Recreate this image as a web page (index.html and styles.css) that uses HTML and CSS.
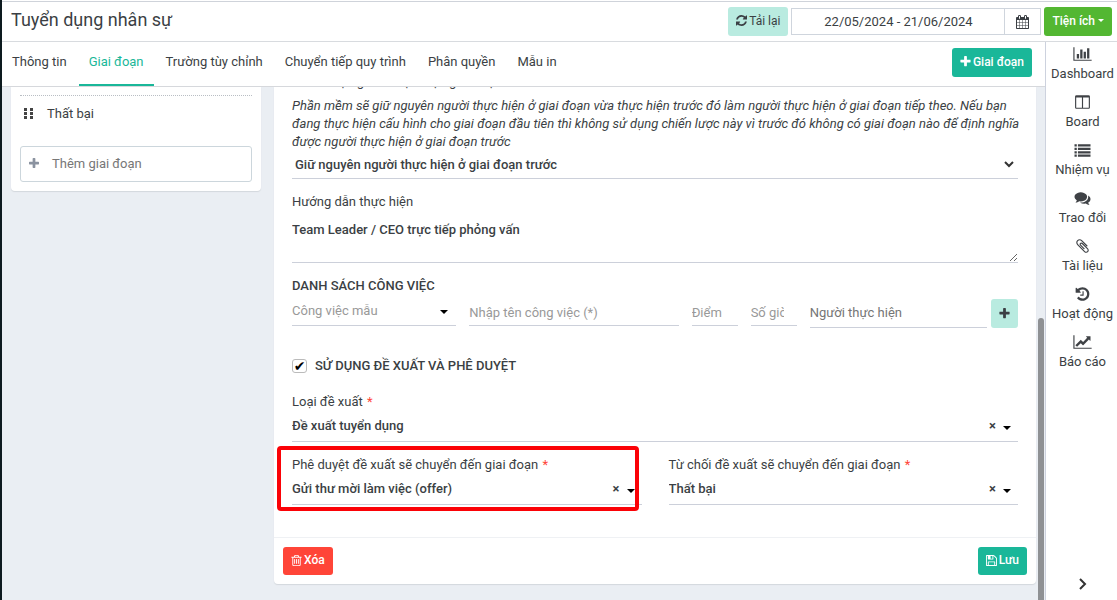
FILE: index.html
```html
<!DOCTYPE html>
<html lang="vi">
<head>
<meta charset="utf-8">
<meta name="viewport" content="width=device-width, initial-scale=1">
<title>Tuyển dụng nhân sự</title>
<link rel="stylesheet" href="styles.css">
</head>
<body>
<svg class="sprite" aria-hidden="true">
  <symbol id="i-refresh" viewBox="128 0 1536 1792"><path d="M1639 1056q0 5-1 7-64 268-268 434.500t-478 166.500q-146 0-282.500-55t-243.500-157l-129 129q-19 19-45 19t-45-19-19-45v-448q0-26 19-45t45-19h448q26 0 45 19t19 45-19 45l-137 137q71 66 161 102t187 36q134 0 250-65t186-179q11-17 53-117 8-23 30-23h192q13 0 22.500 9.500t9.500 22.500zm25-800v448q0 26-19 45t-45 19h-448q-26 0-45-19t-19-45 19-45l138-138q-148-137-349-137-134 0-250 65t-186 179q-11 17-53 117-8 23-30 23h-199q-13 0-22.500-9.500t-9.500-22.500v-7q65-268 270-434.500t480-166.500q146 0 284 55.500t245 156.500l130-129q19-19 45-19t45 19 19 45z"/></symbol>
  <symbol id="i-plus" viewBox="192 0 1408 1792"><path d="M1600 736v192q0 40-28 68t-68 28h-416v416q0 40-28 68t-68 28h-192q-40 0-68-28t-28-68v-416h-416q-40 0-68-28t-28-68v-192q0-40 28-68t68-28h416v-416q0-40 28-68t68-28h192q40 0 68 28t28 68v416h416q40 0 68 28t28 68z"/></symbol>
  <symbol id="i-calendar" viewBox="64 0 1664 1792"><path d="M192 1664h288v-288h-288v288zm352 0h320v-288h-320v288zm-352-352h288v-320h-288v320zm352 0h320v-320h-320v320zm-352-384h288v-288h-288v288zm736 736h320v-288h-320v288zm-384-736h320v-288h-320v288zm768 736h288v-288h-288v288zm-384-352h320v-320h-320v320zm-352-864v-288q0-13-9.500-22.500t-22.500-9.500h-64q-13 0-22.500 9.500t-9.500 22.500v288q0 13 9.500 22.500t22.500 9.500h64q13 0 22.500-9.500t9.500-22.500zm736 864h288v-320h-288v320zm-384-384h320v-288h-320v288zm384 0h288v-288h-288v288zm32-480v-288q0-13-9.500-22.500t-22.500-9.500h-64q-13 0-22.500 9.500t-9.500 22.500v288q0 13 9.500 22.500t22.500 9.500h64q13 0 22.500-9.500t9.500-22.500zm384-64v1280q0 52-38 90t-90 38h-1408q-52 0-90-38t-38-90v-1280q0-52 38-90t90-38h128v-96q0-66 47-113t113-47h64q66 0 113 47t47 113v96h384v-96q0-66 47-113t113-47h64q66 0 113 47t47 113v96h128q52 0 90 38t38 90z"/></symbol>
  <symbol id="i-bars" viewBox="0 0 2048 1792"><path d="M640 896v512h-256v-512h256zm384-512v1024h-256v-1024h256zm1024 1152v128h-2048v-1536h128v1408h1920zm-640-896v768h-256v-768h256zm384-384v1152h-256v-1152h256z"/></symbol>
  <symbol id="i-columns" viewBox="0 0 1792 1792"><path d="M224 1536h608v-1152h-640v1120q0 13 9.500 22.500t22.500 9.500zm1376-32v-1120h-640v1152h608q13 0 22.500-9.500t9.500-22.500zm128-1216v1216q0 66-47 113t-113 47h-1344q-66 0-113-47t-47-113v-1216q0-66 47-113t113-47h1344q66 0 113 47t47 113z"/></symbol>
  <symbol id="i-list" viewBox="0 0 1792 1792"><path d="M0 256h256v256H0zM384 256h1408v256H384zM0 640h256v256H0zM384 640h1408v256H384zM0 1024h256v256H0zM384 1024h1408v256H384zM0 1408h256v256H0zM384 1408h1408v256H384z"/></symbol>
  <symbol id="i-comments" viewBox="0 0 1792 1792"><path d="M1408 768q0 139-94 257t-256.500 186.500-353.500 68.500q-86 0-176-16-124 88-278 128-36 9-86 16h-3q-11 0-20.500-8t-11.500-21q-1-3-1-6.500t.5-6.500 2-6l2.500-5 3.500-5.500 4-5 4.500-5 4-4.500q5-6 23-25t26-29.500 22.500-29 25-38.500 20.500-44q-124-72-195-177t-71-224q0-139 94-257t256.500-186.500 353.500-68.500 353.500 68.500 256.500 186.500 94 257zm384 256q0 120-71 224.500t-195 176.500q10 24 20.500 44t25 38.500 22.500 29 26 29.500 23 25q1 1 4 4.500t4.500 5 4 5 3.500 5.500l2.500 5 2 6 .5 6.500-1 6.500q-3 14-13 22t-22 7q-50-7-86-16-154-40-278-128-90 16-176 16-271 0-472-132 58 4 88 4 161 0 309-45t264-129q125-92 192-212t67-254q0-77-23-152 129 71 204 178t75 230z"/></symbol>
  <symbol id="i-clip" viewBox="0 0 1792 1792"><path d="M1596 1385q0 117-79 196t-196 79q-135 0-235-100l-777-776q-113-115-113-271 0-159 110-270t269-111q158 0 273 113l605 606q10 10 10 22 0 16-30.500 46.500t-46.500 30.500q-13 0-23-10l-606-607q-79-77-181-77-106 0-179 75t-73 181q0 105 76 181l776 777q63 63 145 63 64 0 106-42t42-106q0-82-63-145l-581-581q-26-24-60-24-29 0-48 19t-19 48q0 32 25 59l410 410q10 10 10 22 0 16-31 47t-47 31q-12 0-22-10l-410-410q-63-61-63-149 0-82 57-139t139-57q88 0 149 63l581 581q100 98 100 235z"/></symbol>
  <symbol id="i-history" viewBox="0 0 1792 1792"><path d="M1664 896q0 156-61 298t-164 245-245 164-298 61q-172 0-327-72.500t-264-204.500q-7-10-6.500-22.500t8.500-20.500l137-138q10-9 25-9 16 2 23 12 73 95 179 147t225 52q104 0 198.500-40.500t163.500-109.500 109.500-163.500 40.500-198.500-40.500-198.500-109.500-163.500-163.500-109.500-198.500-40.500q-98 0-188 35.500t-160 101.500l137 138q31 30 14 69-17 40-59 40h-448q-26 0-45-19t-19-45v-448q0-42 40-59 39-17 69 14l130 129q107-101 244.500-156.500t284.500-55.500q156 0 298 61t245 164 164 245 61 298zm-640-288v448q0 14-9 23t-23 9h-320q-14 0-23-9t-9-23v-64q0-14 9-23t23-9h224v-352q0-14 9-23t23-9h64q14 0 23 9t9 23z"/></symbol>
  <symbol id="i-line" viewBox="0 0 2048 1792"><path d="M2048 1536v128h-2048v-1536h128v1408h1920zm-128-1248v435q0 21-19.500 29.500t-35.500-7.500l-121-121-633 633q-10 10-23 10t-23-10l-233-233-416 416-192-192 585-585q10-10 23-10t23 10l233 233 464-464-121-121q-16-16-7.500-35.500t29.500-19.500h435q14 0 23 9t9 23z"/></symbol>
  <symbol id="i-trash" viewBox="192 0 1408 1792"><path d="M704 736v576q0 14-9 23t-23 9h-64q-14 0-23-9t-9-23v-576q0-14 9-23t23-9h64q14 0 23 9t9 23zm256 0v576q0 14-9 23t-23 9h-64q-14 0-23-9t-9-23v-576q0-14 9-23t23-9h64q14 0 23 9t9 23zm256 0v576q0 14-9 23t-23 9h-64q-14 0-23-9t-9-23v-576q0-14 9-23t23-9h64q14 0 23 9t9 23zm128 724v-948h-896v948q0 22 7 40.500t14.500 27 10.500 8.500h832q3 0 10.500-8.500t14.500-27 7-40.500zm-672-1076h448l-48-117q-7-9-17-11h-317q-10 2-17 11zm928 32v64q0 14-9 23t-23 9h-96v948q0 83-47 143.500t-113 60.500h-832q-66 0-113-58.500t-47-141.500v-952h-96q-14 0-23-9t-9-23v-64q0-14 9-23t23-9h309l70-167q15-37 54-63t79-26h320q40 0 79 26t54 63l70 167h309q14 0 23 9t9 23z"/></symbol>
  <symbol id="i-save" viewBox="128 0 1536 1792"><path d="M512 1536h768v-384h-768v384zm896 0h128v-896q0-14-10-38.500t-20-34.500l-281-281q-10-10-34-20t-39-10v416q0 40-28 68t-68 28h-576q-40 0-68-28t-28-68v-416h-128v1280h128v-416q0-40 28-68t68-28h832q40 0 68 28t28 68v416zm-384-928v-320q0-13-9.500-22.500t-22.500-9.500h-192q-13 0-22.500 9.500t-9.500 22.500v320q0 13 9.500 22.500t22.500 9.500h192q13 0 22.500-9.500t9.500-22.500zm640 32v928q0 40-28 68t-68 28h-1344q-40 0-68-28t-28-68v-1344q0-40 28-68t68-28h928q40 0 88 20t76 48l280 280q28 28 48 76t20 88z"/></symbol>
</svg>

<div class="app">
  <header class="topbar">
    <h1 class="title">Tuyển dụng nhân sự</h1>
    <button class="btn btn-soft" type="button"><svg class="icon"><use href="#i-refresh"/></svg>Tải lại</button>
    <div class="range">
      <input class="range-input" type="text" aria-label="Khoảng thời gian" value="22/05/2024 - 21/06/2024">
      <button class="range-btn" type="button" aria-label="Chọn ngày"><svg class="icon"><use href="#i-calendar"/></svg></button>
    </div>
    <button class="btn btn-green" type="button">Tiện ích<span class="caret-sm"></span></button>
  </header>

  <div class="body">
    <div class="main">
      <nav class="tabs">
        <a class="tab" href="#">Thông tin</a>
        <a class="tab tab-active" href="#">Giai đoạn</a>
        <a class="tab" href="#">Trường tùy chỉnh</a>
        <a class="tab" href="#">Chuyển tiếp quy trình</a>
        <a class="tab" href="#">Phân quyền</a>
        <a class="tab" href="#">Mẫu in</a>
        <button class="btn btn-teal tabs-add" type="button"><svg class="icon"><use href="#i-plus"/></svg>Giai đoạn</button>
      </nav>

      <div class="workspace">
        <aside class="card stages">
          <div class="stage">
            <svg class="grip" viewBox="0 0 10 11"><path d="M0 0h3v3H0zM6 0h3v3H6zM0 4h3v3H0zM6 4h3v3H6zM0 8h3v3H0zM6 8h3v3H6z"/></svg>
            <span>Thất bại</span>
          </div>
          <button class="stage-add" type="button"><svg class="icon"><use href="#i-plus"/></svg>Thêm giai đoạn</button>
        </aside>

        <form class="card detail">
          <div class="fields">
            <label class="label strategy-label" for="strategy">Chiến lược giành thực hiện giai đoạn</label>
            <p class="hint">Phần mềm sẽ giữ nguyên người thực hiện ở giai đoạn vừa thực hiện trước đó làm người thực hiện ở giai đoạn tiếp theo. Nếu bạn đang thực hiện cấu hình cho giai đoạn đầu tiên thì không sử dụng chiến lược này vì trước đó không có giai đoạn nào để định nghĩa được người thực hiện ở giai đoạn trước</p>
            <div class="pick pick-strategy">
              <select class="control" id="strategy"><option>Giữ nguyên người thực hiện ở giai đoạn trước</option></select>
              <svg class="chevron" viewBox="0 0 10 7"><path d="M1 1l4 4 4-4"/></svg>
            </div>

            <label class="label guide-label" for="guide">Hướng dẫn thực hiện</label>
            <textarea class="guide" id="guide">Team Leader / CEO trực tiếp phỏng vấn</textarea>

            <h2 class="heading">DANH SÁCH CÔNG VIỆC</h2>
            <div class="jobs">
              <div class="pick pick-job">
                <select class="control control-muted" aria-label="Công việc mẫu"><option>Công việc mẫu</option></select>
                <span class="caret"></span>
              </div>
              <input class="job-input" type="text" aria-label="Tên công việc" placeholder="Nhập tên công việc (*)">
              <input class="job-input" type="text" aria-label="Điểm" placeholder="Điểm">
              <input class="job-input job-hours" type="text" aria-label="Số giờ" placeholder="Số giờ">
              <div class="assign">
                <input class="job-input job-person" type="text" aria-label="Người thực hiện" placeholder="Người thực hiện">
                <button class="btn btn-soft btn-plus" type="button" aria-label="Thêm công việc"><svg class="icon"><use href="#i-plus"/></svg></button>
              </div>
            </div>

            <label class="approval"><input class="check" type="checkbox" checked>SỬ DỤNG ĐỀ XUẤT VÀ PHÊ DUYỆT</label>

            <div class="field">
              <label class="label" for="kind">Loại đề xuất <span class="req">*</span></label>
              <div class="pick">
                <select class="control" id="kind"><option>Đề xuất tuyển dụng</option></select>
                <button class="clear" type="button" aria-label="Xóa lựa chọn">×</button><span class="caret"></span>
              </div>
            </div>
            <div class="pair">
              <div class="field field-marked">
                <label class="label" for="approve">Phê duyệt đề xuất sẽ chuyển đến giai đoạn <span class="req">*</span></label>
                <div class="pick">
                  <select class="control" id="approve"><option>Gửi thư mời làm việc (offer)</option></select>
                  <button class="clear" type="button" aria-label="Xóa lựa chọn">×</button><span class="caret"></span>
                </div>
              </div>
              <div class="field">
                <label class="label" for="reject">Từ chối đề xuất sẽ chuyển đến giai đoạn <span class="req">*</span></label>
                <div class="pick">
                  <select class="control" id="reject"><option>Thất bại</option></select>
                  <button class="clear" type="button" aria-label="Xóa lựa chọn">×</button><span class="caret"></span>
                </div>
              </div>
            </div>
          </div>
          <footer class="actions">
            <button class="btn btn-red" type="button"><svg class="icon"><use href="#i-trash"/></svg>Xóa</button>
            <button class="btn btn-teal" type="submit"><svg class="icon"><use href="#i-save"/></svg>Lưu</button>
          </footer>
        </form>
        <div class="scroll"><div class="thumb"></div></div>
      </div>
    </div>

    <nav class="rail">
      <a class="rail-item" href="#"><svg class="rail-icon"><use href="#i-bars"/></svg>Dashboard</a>
      <a class="rail-item" href="#"><svg class="rail-icon"><use href="#i-columns"/></svg>Board</a>
      <a class="rail-item" href="#"><svg class="rail-icon"><use href="#i-list"/></svg>Nhiệm vụ</a>
      <a class="rail-item" href="#"><svg class="rail-icon"><use href="#i-comments"/></svg>Trao đổi</a>
      <a class="rail-item" href="#"><svg class="rail-icon"><use href="#i-clip"/></svg>Tài liệu</a>
      <a class="rail-item" href="#"><svg class="rail-icon"><use href="#i-history"/></svg>Hoạt động</a>
      <a class="rail-item" href="#"><svg class="rail-icon"><use href="#i-line"/></svg>Báo cáo</a>
      <button class="rail-toggle" type="button" aria-label="Thu gọn"><svg viewBox="0 0 8 12"><path d="M1 1l5 5-5 5"/></svg></button>
    </nav>
  </div>
</div>
</body>
</html>
```
FILE: styles.css
```css
* { box-sizing: border-box; }

body {
  margin: 0;
  font: 13px/18px Roboto, "Noto Sans", sans-serif;
  color: #3b3f44;
  background: #fff;
}

button, input, select, textarea { font: inherit; color: inherit; }
button { cursor: pointer; }
a { color: inherit; text-decoration: none; }
.sprite { display: none; }

.app {
  display: flex;
  flex-direction: column;
  height: 100vh;
  overflow: hidden;
  border-left: 2px solid #0d1a1f;
}

/* Top bar */
.topbar {
  display: flex;
  flex: none;
  align-items: center;
  gap: 3px;
  height: 41px;
  margin-top: 1px;
  padding: 0 5px 0 9px;
  border-top: 1px solid #cfd3da;
  border-bottom: 1px solid #d8dbdf;
}
.title {
  flex: 1;
  margin: 0;
  font-size: 18px;
  line-height: 24px;
  font-weight: 400;
  padding-bottom: 3px;
}

.btn {
  display: inline-flex;
  flex: none;
  align-items: center;
  justify-content: center;
  gap: 2px;
  height: 29px;
  padding: 0 8px 2px;
  border: 0;
  border-radius: 3px;
  font-size: 12px;
}
.btn-soft { background: #b9ebe0; }
.btn-green { background: #53b732; color: #fff; font-weight: 500; }
.btn-teal { background: #1ab799; color: #fff; font-weight: 500; }
.btn-red { background: #ff4538; color: #fff; font-weight: 500; }
.icon { width: 11px; height: 13px; fill: currentColor; }

.range { display: flex; width: 250px; height: 27px; }
.range-input {
  flex: 1;
  min-width: 0;
  padding: 0;
  border: 1px solid #cfd5dd;
  text-align: center;
}
.range-btn {
  width: 36px;
  padding: 0;
  border: 1px solid #cfd5dd;
  border-left: 0;
  background: #fff;
}
.range-btn .icon { width: 13px; height: 14px; vertical-align: middle; }
.caret-sm {
  margin-left: 1px;
  border: 3px solid transparent;
  border-top-color: currentColor;
  border-bottom: 0;
}

.body { display: flex; flex: 1; min-height: 0; }
.main { display: flex; flex: 1; flex-direction: column; min-width: 0; }

/* Tabs */
.tabs {
  display: flex;
  flex: none;
  gap: 2px;
  height: 45px;
  padding-right: 13px;
  border-bottom: 1px solid #d6d8dc;
}
.tab {
  padding: 11px 10px 0;
  border-bottom: 2px solid transparent;
}
.tab-active { color: #1ab799; border-bottom-color: #1ab799; }
.tabs-add { margin: 6px 0 0 auto; }

/* Scrolled workspace */
.workspace {
  display: grid;
  grid-template-columns: 250px minmax(0, 1fr) 9px;
  flex: 1;
  align-items: start;
  min-height: 0;
  padding-left: 9px;
  overflow: hidden;
  background: #eaeef3;
}
.card {
  background: #fff;
  border-radius: 0 0 4px 4px;
  box-shadow: 0 1px 1px #d3d7dd;
}
.stages { padding: 8px 9px 9px; }
.stage {
  display: flex;
  align-items: center;
  gap: 13px;
  height: 36px;
  margin-bottom: 15px;
  padding-left: 4px;
  border-top: 1px dotted #b9bec4;
}
.grip { width: 10px; height: 11px; fill: #444; }
.stage-add {
  display: flex;
  align-items: center;
  gap: 13px;
  width: 100%;
  height: 36px;
  padding: 0 8px 1px;
  border: 1px solid #ccd6dc;
  border-radius: 3px;
  background: #fff;
  color: #777;
}
.stage-add .icon { width: 10px; height: 13px; fill: #8b93a0; }

.detail { margin-left: 13px; }
.fields { padding: 0 18px 32px; }
.label { display: block; }
.strategy-label { margin-top: -14px; margin-bottom: 6px; }
.hint { margin: 0 -8px 0 0; font-style: italic; }

.pick {
  display: flex;
  align-items: center;
  height: 31px;
  border-bottom: 1px solid #ccd0da;
}
.control {
  flex: 1;
  min-width: 0;
  height: 26px;
  padding: 0;
  border: 0;
  background: transparent;
  font-weight: 500;
  appearance: none;
}
.control-muted { font-weight: 400; color: #999; }
.pick-strategy { height: 28px; padding: 0 4px 0 3px; }
.chevron { width: 10px; height: 7px; fill: none; stroke: #333; stroke-width: 2; }
.caret {
  margin: 4px 7px 0 7px;
  border: 4px solid transparent;
  border-top-color: #000;
  border-bottom: 0;
}
.clear {
  padding: 0;
  border: 0;
  background: none;
  font-weight: 700;
}

.guide-label { margin: 14px 0 10px; }
.guide {
  display: block;
  width: 100%;
  height: 42px;
  padding: 0;
  border: 0;
  border-bottom: 1px solid #ccd0da;
  font-weight: 500;
  resize: vertical;
}
.heading {
  margin: 14px 0 4px;
  font-size: 13px;
  line-height: 18px;
  font-weight: 500;
}
.jobs {
  display: grid;
  grid-template-columns: 164fr 209fr 46px 46px 208fr;
  gap: 13px;
  align-items: start;
}
.pick-job { height: 27px; }
.pick-job .control { padding-bottom: 3px; }
.pick-job .caret { margin: 0 8px 0 0; }
.job-input {
  width: 100%;
  min-width: 0;
  height: 27px;
  padding: 0;
  border: 0;
  border-bottom: 1px solid #ccd0da;
}
.job-input::placeholder { color: #999; }
.job-hours { padding-right: 13px; }
.job-person { height: 29px; padding-bottom: 2px; }
.job-person::placeholder { color: #757575; }
.assign { display: flex; gap: 4px; }
.btn-plus { width: 27px; padding: 0; }

.approval {
  display: flex;
  align-items: center;
  gap: 8px;
  margin: 29px 0 18px;
  font-weight: 500;
}
.check {
  display: grid;
  place-items: center;
  width: 15px;
  height: 14px;
  margin: 0;
  border: 1px solid #bbb;
  border-radius: 3px;
  background: #fff;
  appearance: none;
}
.check:checked::before {
  content: "✔";
  font: 14px/12px "DejaVu Sans", sans-serif;
  color: #000;
}
.req { margin-left: 1px; color: #ff4538; }
.pair {
  display: grid;
  grid-template-columns: 1fr 1fr;
  gap: 27px;
  margin-top: 14px;
}
.field-marked { position: relative; }
.field-marked::after {
  content: "";
  position: absolute;
  inset: -10px 3px -6px -15px;
  border: 4px solid #fb0207;
  border-radius: 4px;
  pointer-events: none;
}

.actions {
  display: flex;
  justify-content: space-between;
  padding: 9px;
  border-top: 1px solid #eff1f4;
}
.actions .btn { height: 28px; }

.scroll {
  display: flex;
  align-items: flex-end;
  align-self: stretch;
  padding: 0 1px 0 2px;
}
.thumb {
  width: 6px;
  height: 55%;
  border-radius: 3px 3px 0 0;
  background: #8f9194;
}

/* Right rail */
.rail {
  display: flex;
  flex: none;
  flex-direction: column;
  width: 72px;
  padding: 4px 0 10px 2px;
  border-left: 1px solid #cdd2de;
  align-items: center;
}
.rail-item {
  display: flex;
  flex-direction: column;
  align-items: center;
  gap: 3px;
  height: 48px;
}
.rail-icon { width: 19px; height: 16px; fill: #3f4246; }
.rail-toggle {
  margin-top: auto;
  padding: 0;
  border: 0;
  background: none;
  line-height: 0;
}
.rail-toggle svg { width: 8px; height: 12px; fill: none; stroke: #333; stroke-width: 2; }
```
